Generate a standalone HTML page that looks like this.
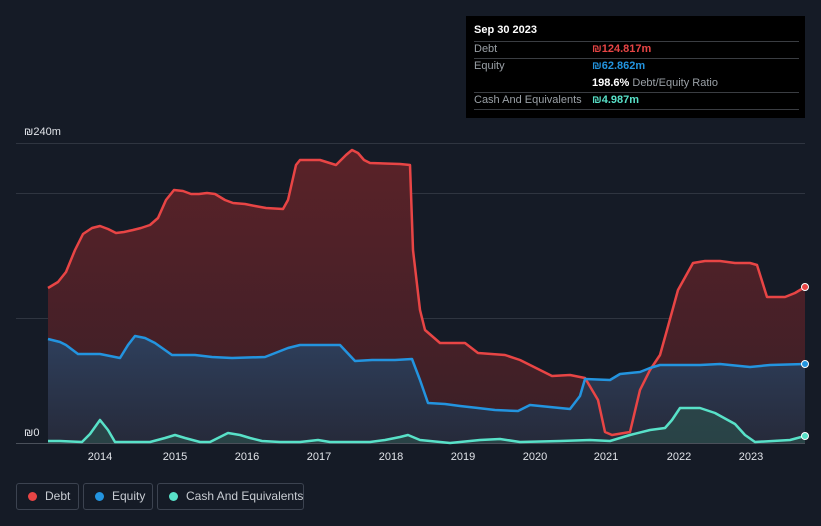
<!DOCTYPE html>
<html><head><style>
html,body{margin:0;width:821px;height:526px;overflow:hidden}
body{background:#151b26;font-family:"Liberation Sans",sans-serif;position:relative}
.tt{position:absolute;left:466px;top:16px;width:339px;height:102px;background:#000;}
.tt div{position:absolute;font-size:11px;color:#9aa0a6;white-space:nowrap}
.ln{position:absolute;left:8px;width:325px;height:1px;background:#3a3d42}
.lg{position:absolute;top:483px;height:27px;border:1px solid #3c4350;border-radius:3px;box-sizing:border-box;color:#c8ccd2;font-size:12px;line-height:25px;padding-left:28px;white-space:nowrap}
.lg i{position:absolute;left:11px;top:8px;width:9px;height:9px;border-radius:50%}
</style></head><body>
<svg width="821" height="526" style="position:absolute;left:0;top:0">
<defs>
<linearGradient id="dg" x1="0" y1="0" x2="0" y2="1"><stop offset="0" stop-color="#5a2228"/><stop offset="1" stop-color="#3a1f27"/></linearGradient>
<linearGradient id="eg" x1="0" y1="0" x2="0" y2="1"><stop offset="0" stop-color="#2e3f5c"/><stop offset="1" stop-color="#262a3a"/></linearGradient>
</defs>
<g stroke="#2f3540" stroke-width="1"><line x1="16" y1="143.5" x2="805" y2="143.5"/><line x1="16" y1="193.5" x2="805" y2="193.5"/><line x1="16" y1="318.5" x2="805" y2="318.5"/><line x1="16" y1="443.5" x2="805" y2="443.5" stroke="#4a505a"/></g>
<polygon fill="url(#dg)" points="48,443 48,288 58,282 66,272 75,250 83,234 92,228 100,226 108,229 116,233 124,232 133,230 141,228 150,225 158,218 166,200 174,190 183,191 191,194 199,194 207,193 215,194 225,200 233,203 245,204 255,206 266,208 283,209 288,200 296,165 300,160 320,160 336,165 346,155 352,150 358,153 364,160 370,163 400,164 410,165 413,250 420,310 425,330 440,343 465,343 478,353 505,355 520,360 540,370 552,376 570,375 585,378 598,400 605,432 612,435 630,432 640,390 650,370 660,355 667,330 678,290 693,263 705,261 720,261 735,263 750,263 757,265 767,297 785,297 795,293 805,287 805,443"/>
<polygon fill="url(#eg)" points="48,443 48,339 60,342 66,345 78,354 100,354 110,356 120,358 128,345 135,336 145,338 155,343 172,355 195,355 212,357 232,358 265,357 288,348 300,345 340,345 355,361 372,360 395,360 412,359 420,380 428,403 445,404 460,406 478,408 495,410 518,411 530,405 550,407 570,409 580,396 585,379 610,380 620,374 640,372 650,368 660,365 700,365 720,364 750,367 770,365 805,364 805,443"/>
<polygon fill="#2a4a4a" opacity="0.8" points="48,443 48,441 60,441 82,442 90,434 100,420 108,430 115,442 150,442 165,438 175,435 185,438 200,442 210,442 218,438 228,433 240,435 250,438 262,441 280,442 300,442 318,440 330,442 370,442 385,440 400,437 408,435 420,440 450,443 480,440 500,439 520,442 560,441 590,440 610,441 630,435 650,430 665,428 672,420 680,408 700,408 715,413 735,424 745,435 755,442 790,440 805,436 805,443"/>
<g fill="none" stroke-width="2.5" stroke-linejoin="round">
<polyline stroke="#e84545" points="48,288 58,282 66,272 75,250 83,234 92,228 100,226 108,229 116,233 124,232 133,230 141,228 150,225 158,218 166,200 174,190 183,191 191,194 199,194 207,193 215,194 225,200 233,203 245,204 255,206 266,208 283,209 288,200 296,165 300,160 320,160 336,165 346,155 352,150 358,153 364,160 370,163 400,164 410,165 413,250 420,310 425,330 440,343 465,343 478,353 505,355 520,360 540,370 552,376 570,375 585,378 598,400 605,432 612,435 630,432 640,390 650,370 660,355 667,330 678,290 693,263 705,261 720,261 735,263 750,263 757,265 767,297 785,297 795,293 805,287"/>
<polyline stroke="#2394df" points="48,339 60,342 66,345 78,354 100,354 110,356 120,358 128,345 135,336 145,338 155,343 172,355 195,355 212,357 232,358 265,357 288,348 300,345 340,345 355,361 372,360 395,360 412,359 420,380 428,403 445,404 460,406 478,408 495,410 518,411 530,405 550,407 570,409 580,396 585,379 610,380 620,374 640,372 650,368 660,365 700,365 720,364 750,367 770,365 805,364"/>
<polyline stroke="#58e1c8" points="48,441 60,441 82,442 90,434 100,420 108,430 115,442 150,442 165,438 175,435 185,438 200,442 210,442 218,438 228,433 240,435 250,438 262,441 280,442 300,442 318,440 330,442 370,442 385,440 400,437 408,435 420,440 450,443 480,440 500,439 520,442 560,441 590,440 610,441 630,435 650,430 665,428 672,420 680,408 700,408 715,413 735,424 745,435 755,442 790,440 805,436"/>
</g>
<circle cx="805" cy="287" r="3.5" fill="#e84545" stroke="#fff" stroke-width="1"/>
<circle cx="805" cy="364" r="3.5" fill="#2394df" stroke="#fff" stroke-width="1"/>
<circle cx="805" cy="436" r="3.5" fill="#58e1c8" stroke="#fff" stroke-width="1"/>
<g fill="#e0e3e8" font-size="11" font-family="Liberation Sans,sans-serif">
<text x="24" y="135">₪240m</text><text x="24" y="436">₪0</text>
<g text-anchor="middle"><text x="100" y="460">2014</text><text x="175" y="460">2015</text><text x="247" y="460">2016</text><text x="319" y="460">2017</text><text x="391" y="460">2018</text><text x="463" y="460">2019</text><text x="535" y="460">2020</text><text x="606" y="460">2021</text><text x="679" y="460">2022</text><text x="751" y="460">2023</text></g>
</g>
</svg>
<div class="tt">
<div style="left:8px;top:8px;color:#fff;font-weight:bold">Sep 30 2023</div>
<div class="ln" style="top:25px"></div>
<div style="left:8px;top:27px">Debt</div><div style="left:126px;top:27px;color:#e84545;font-weight:bold">₪124.817m</div>
<div class="ln" style="top:42px"></div>
<div style="left:8px;top:44px">Equity</div><div style="left:126px;top:44px;color:#2394df;font-weight:bold">₪62.862m</div>
<div style="left:126px;top:61px"><b style="color:#fff">198.6%</b> Debt/Equity Ratio</div>
<div class="ln" style="top:76px"></div>
<div style="left:8px;top:78px">Cash And Equivalents</div><div style="left:126px;top:78px;color:#58e1c8;font-weight:bold">₪4.987m</div>
<div class="ln" style="top:93px"></div>
</div>
<div class="lg" style="left:16px;width:63px"><i style="background:#e84545"></i>Debt</div>
<div class="lg" style="left:83px;width:70px"><i style="background:#2394df"></i>Equity</div>
<div class="lg" style="left:157px;width:147px"><i style="background:#58e1c8"></i>Cash And Equivalents</div>
</body></html>
